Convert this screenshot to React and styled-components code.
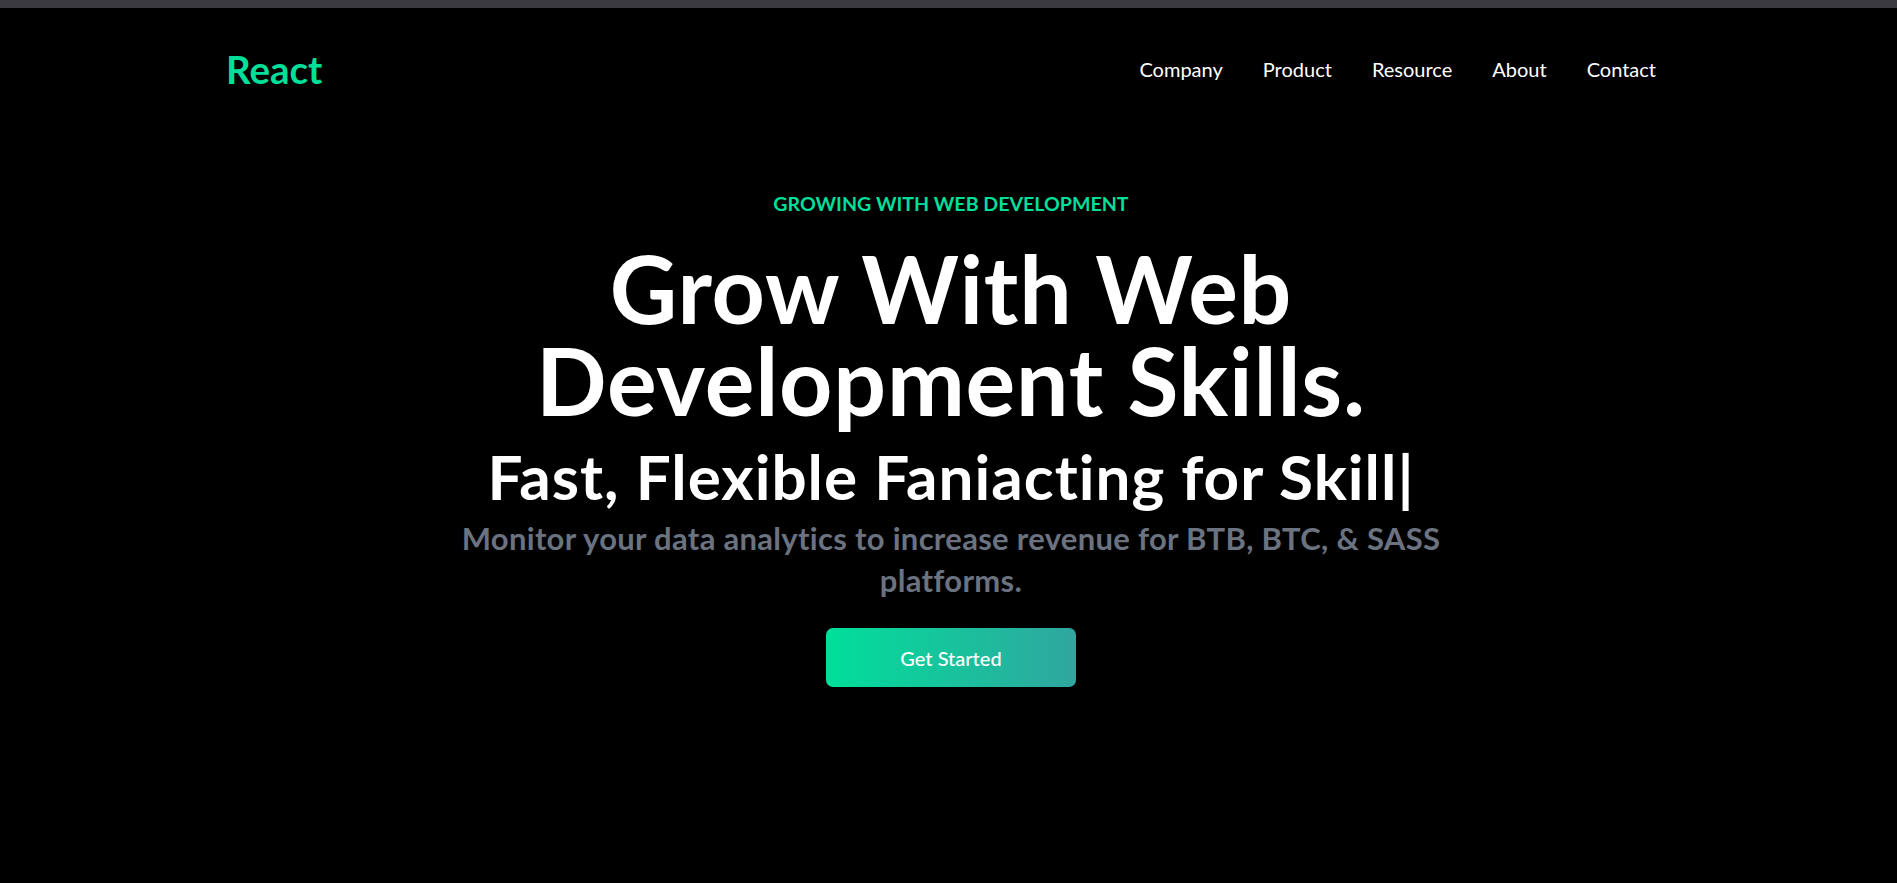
import styled, { createGlobalStyle } from "styled-components";

const GlobalStyle = createGlobalStyle`
  * { box-sizing: border-box; }
  html, body {
    margin: 0;
    padding: 0;
    background: #000;
    font-family: Lato, "Open Sans", sans-serif;
  }
`;

const navLinks = ["Company", "Product", "Resource", "About", "Contact"];

const App = () => {
  return (
    <Page>
      <GlobalStyle />
      <TopStrip />
      <Main>
        <NavBar>
          <Logo>React</Logo>
          <Links>
            {navLinks.map((link) => (
              <LinkItem key={link}>{link}</LinkItem>
            ))}
          </Links>
        </NavBar>
        <Hero>
          <Eyebrow>GROWING WITH WEB DEVELOPMENT</Eyebrow>
          <Title>
            Grow With Web
            <br />
            Development Skills.
          </Title>
          <Typed>Fast, Flexible Faniacting for Skill|</Typed>
          <Lead>
            Monitor your data analytics to increase revenue for BTB, BTC, &amp;
            SASS platforms.
          </Lead>
          <CtaButton>Get Started</CtaButton>
        </Hero>
      </Main>
    </Page>
  );
};

const Page = styled.div`
  min-height: 883px;
  background: #000;
  color: #fff;
`;

const TopStrip = styled.div`
  height: 8px;
  background: #3b3a40;
`;

const Main = styled.div`
  padding-left: 5px;
`;

const NavBar = styled.nav`
  display: flex;
  justify-content: space-between;
  align-items: center;
  height: 122px;
  max-width: 1490px;
  margin: 0 auto;
  padding: 0 20px;
`;

const Logo = styled.h1`
  margin: 0;
  font-size: 38.5px;
  font-weight: 700;
  color: #00df9a;
`;

const Links = styled.ul`
  display: flex;
  list-style: none;
  margin: 0;
  padding: 0;
`;

const LinkItem = styled.li`
  padding: 20px;
  font-size: 20px;
  color: #fff;
`;

const Hero = styled.main`
  display: flex;
  flex-direction: column;
  align-items: center;
  text-align: center;
  max-width: 1000px;
  margin: 0 auto;
  padding-top: 59px;
`;

const Eyebrow = styled.p`
  margin: 0;
  font-size: 19.6px;
  line-height: 30px;
  font-weight: 700;
  color: #00df9a;
`;

const Title = styled.h1`
  margin: 23px 0 0;
  font-size: 93px;
  line-height: 92px;
  font-weight: 700;
  letter-spacing: 0.8px;
`;

const Typed = styled.h2`
  margin: 20px 0 0;
  font-size: 62px;
  line-height: 60px;
  font-weight: 700;
  letter-spacing: 1px;
`;

const Lead = styled.p`
  margin: 11px 0 0;
  font-size: 31px;
  line-height: 42px;
  font-weight: 700;
  letter-spacing: 0.3px;
  color: #6b7280;
`;

const CtaButton = styled.button`
  margin-top: 27px;
  width: 250px;
  height: 59px;
  border: none;
  border-radius: 7px;
  background: linear-gradient(to right, #00df9a, #30a69f);
  color: #fff;
  font-family: inherit;
  font-size: 20px;
  font-weight: 500;
  cursor: pointer;
`;

export default App;
